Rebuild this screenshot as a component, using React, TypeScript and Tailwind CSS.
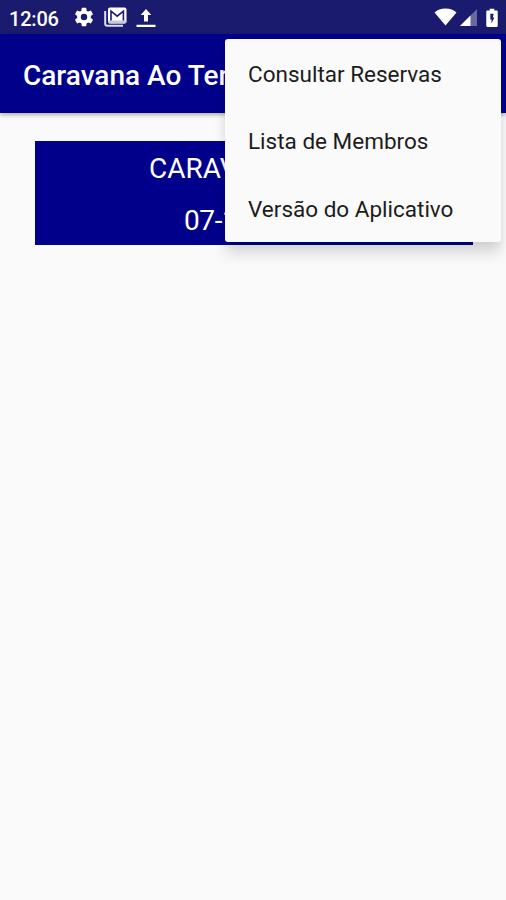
import type { ReactNode } from 'react';

const menuItems = ['Consultar Reservas', 'Lista de Membros', 'Versão do Aplicativo'];

function Icon({ className, viewBox = '0 0 24 24', children }: { className: string; viewBox?: string; children: ReactNode }) {
  return (
    <svg viewBox={viewBox} className={`shrink-0 ${className}`} fill="currentColor" aria-hidden="true">
      {children}
    </svg>
  );
}

function StatusBar() {
  return (
    <header className="flex h-[34px] items-center bg-[#1a1a6e] pr-[8px] pl-[9px] text-white">
      <span className="w-[64px] pt-[3px] text-[20px] leading-none font-medium tracking-[-0.2px]">12:06</span>
      <Icon className="h-[22px] w-[22px]">
        <path d="M19.43 12.98c.04-.32.07-.64.07-.98s-.03-.66-.07-.98l2.11-1.65c.19-.15.24-.42.12-.64l-2-3.46c-.12-.22-.39-.3-.61-.22l-2.49 1c-.52-.4-1.08-.73-1.69-.98l-.38-2.65A.49.49 0 0 0 14 2h-4c-.25 0-.46.18-.49.42l-.38 2.65c-.61.25-1.17.59-1.69.98l-2.49-1c-.23-.09-.49 0-.61.22l-2 3.46c-.13.22-.07.49.12.64l2.11 1.65c-.04.32-.07.65-.07.98s.03.66.07.98l-2.11 1.65c-.19.15-.24.42-.12.64l2 3.46c.12.22.39.3.61.22l2.49-1c.52.4 1.08.73 1.69.98l.38 2.65c.03.24.24.42.49.42h4c.25 0 .46-.18.49-.42l.38-2.65c.61-.25 1.17-.59 1.69-.98l2.49 1c.23.09.49 0 .61-.22l2-3.46c.12-.22.07-.49-.12-.64l-2.11-1.65zM12 15.5a3.5 3.5 0 1 1 0-7 3.5 3.5 0 0 1 0 7z" />
      </Icon>
      <Icon className="ml-[9px] h-[20px] w-[23px]" viewBox="0 0 23 20">
        <path d="M1.2 4v12.8a2 2 0 0 0 2 2H19" fill="none" stroke="#dedeea" strokeWidth="2" />
        <path d="M6 .5h14.500a2 2 0 0 1 2 2v12a2 2 0 0 1-2 2H6a2 2 0 0 1-2-2v-12a2 2 0 0 1 2-2z" />
        <path d="M4 13.500h18.500v1a2 2 0 0 1-2 2H6a2 2 0 0 1-2-2z" fill="#c9c9dc" />
        <path d="M7 13.500V4.200l6.200 5 6.200-5v9.300" fill="none" stroke="#1a1a6e" strokeWidth="1.600" />
      </Icon>
      <Icon className="mt-px ml-[9px] h-[18px] w-[20px]" viewBox="0 0 20 18">
        <path d="M10 0l5.300 6H12v6.500H8V6H4.700zM.5 15.700h19V18H.5z" />
      </Icon>
      <div className="ml-auto flex items-center">
        <Icon className="h-[18px] w-[23px]" viewBox="0 0 23 18">
          <path d="M.5 4.500C3.300 2 7 .5 11.500.5S19.700 2 22.500 4.500L11.500 17.500z" />
        </Icon>
        <Icon className="mt-px ml-[3px] h-[17px] w-[17px]" viewBox="0 0 17 17">
          <path d="M0 17L17 0v17z" opacity="0.35" />
          <path d="M0 17L10.500 6.500V17z" />
        </Icon>
        <Icon className="mt-px ml-[9px] h-[20px] w-[12px]" viewBox="0 0 13 20">
          <path d="M4 0h5v2h2.500c.8 0 1.200.5 1.200 1.200v15.300c0 .8-.5 1.300-1.200 1.300h-10C.8 19.800.3 19.300.3 18.500V3.200C.3 2.500.8 2 1.500 2H4z" />
          <path d="M8.300 5.500H4.700v6H6V16L9 9.500H7.300z" fill="#1a1a6e" />
        </Icon>
      </div>
    </header>
  );
}

function OverflowMenu() {
  return (
    <ul className="absolute top-[39px] left-[225px] h-[203px] w-[276px] rounded-[3px] bg-[#fafafa] shadow-[0_13px_14px_-1px_rgba(0,0,0,0.13),0_3px_8px_rgba(0,0,0,0.06)]">
      {menuItems.map((item) => (
        <li key={item} className="flex h-[67.5px] items-center pt-[4px] pl-[23px] text-[22.500px] text-[#1c1c1c]">
          {item}
        </li>
      ))}
    </ul>
  );
}

export default function App() {
  return (
    <div className="relative h-[900px] w-[506px] overflow-hidden bg-[#fafafa] font-['Roboto',sans-serif]">
      <StatusBar />
      <div className="flex h-[79px] items-center bg-[#00008b] pt-[4px] pl-[23px] text-[28px] font-medium text-white shadow-[0_2px_4px_rgba(0,0,0,0.3)]">
        <h1 className="w-[204px] overflow-hidden whitespace-nowrap">Caravana Ao Tem</h1>
      </div>
      <main className="pt-[28px] pr-[33px] pl-[35px]">
        <div className="h-[103.500px] bg-[#00008b] text-[28px] text-white">
          <p className="flex h-[52px] items-center pt-[4px] pl-[114px]">CARAVANA</p>
          <p className="flex h-[52px] items-center pt-[4px] pl-[149px] tracking-[-0.4px]">07-1</p>
        </div>
      </main>
      <OverflowMenu />
    </div>
  );
}
